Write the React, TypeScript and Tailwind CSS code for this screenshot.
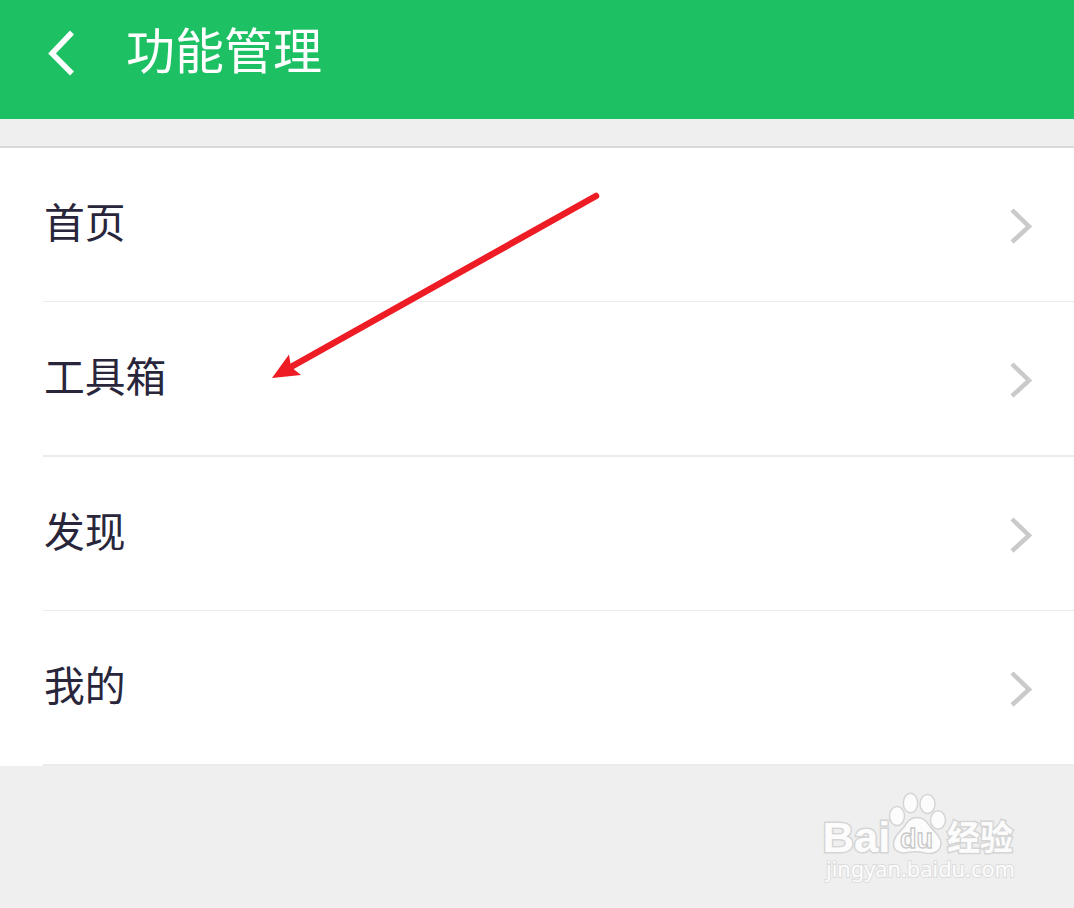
const rows = [
  { label: "首页", size: "h-[154px]", line: "border-b" },
  { label: "工具箱", size: "h-[155px]", line: "border-b-2" },
  { label: "发现", size: "h-[154px]", line: "border-b" },
  { label: "我的", size: "h-[155px]", line: "border-b-2" },
];

const Header = () => {
  return (
    <header className="flex h-[119px] items-start bg-[#1dc163] text-white">
      <svg className="mt-[30px] ml-[46px] h-12 w-8" viewBox="0 0 32 48" fill="none">
        <path d="M26 2.5L6 23.5L26 43.5" stroke="currentColor" strokeWidth="5.5" />
      </svg>
      <h1 className="mt-[12px] ml-[48px] text-[49px] leading-[72px]">功能管理</h1>
    </header>
  );
};

const Row = ({ label, size, line }: { label: string; size: string; line: string }) => {
  return (
    <li className={`flex bg-white pl-[43px] ${size}`}>
      <div className={`flex flex-1 items-center justify-between border-[#ebebeb] pr-[41px] ${line}`}>
        <span className="mb-[8px] ml-px text-[40.8px] leading-[60px]">{label}</span>
        <svg className="mt-[2px] h-10 w-6" viewBox="0 0 24 40" fill="none">
          <path d="M3 4L20 20.5L3 36" stroke="#cacaca" strokeWidth="4.5" />
        </svg>
      </div>
    </li>
  );
};

const Arrow = () => {
  return (
    <svg className="absolute top-[185px] left-[265px] h-[200px] w-[340px]" viewBox="265 185 340 200">
      <path d="M596 196L290 367.5" stroke="#ee1c25" strokeWidth="6.5" strokeLinecap="round" />
      <path d="M272 378L289 354.5L291 367L301 375Z" fill="#ee1c25" />
    </svg>
  );
};

const Watermark = () => {
  return (
    <svg
      className="absolute top-[785px] left-[815px] h-[105px] w-[210px] font-['Liberation_Sans','Noto_Sans_CJK_SC',sans-serif]"
      viewBox="815 785 210 105"
      fill="#fcfcfc"
      stroke="#d5d5d5"
      strokeWidth="1.5"
    >
      <g fontWeight="700" paintOrder="stroke" strokeWidth="3">
        <text x="822.5" y="851.5" fontSize="43" textLength="68" lengthAdjust="spacingAndGlyphs">
          Bai
        </text>
        <text x="947" y="849.5" fontSize="34" textLength="66" lengthAdjust="spacingAndGlyphs">
          经验
        </text>
      </g>
      <ellipse cx="897" cy="816" rx="7.5" ry="9.5" />
      <ellipse cx="910.5" cy="803" rx="7.2" ry="9.8" />
      <ellipse cx="927.5" cy="804" rx="7.5" ry="9.5" />
      <ellipse cx="938" cy="820" rx="7.5" ry="9.3" />
      <path d="M917 817.5C910 817.5 907 822 904 827C900 832 893.5 836 893.5 844C893.5 851 900 854 907 852.5C913 851.5 920 851.5 925 853C934 855 941 851 941 843C941 836 933 831 929 825C926 820 922 817.5 917 817.5Z" />
      <text x="900" y="847.5" fontSize="27" fontWeight="700" textLength="33" lengthAdjust="spacingAndGlyphs" stroke="#c8c8c8" strokeWidth="1.3">
        du
      </text>
      <text
        className="font-['Noto_Sans',sans-serif]"
        x="826"
        y="877"
        fontSize="22"
        textLength="189"
        lengthAdjust="spacingAndGlyphs"
        paintOrder="stroke"
        strokeWidth="2"
        stroke="#dcdcdc"
      >
        jingyan.baidu.com
      </text>
    </svg>
  );
};

export default function App() {
  return (
    <div className="relative h-[908px] w-[1074px] overflow-hidden bg-[#efefef] font-['Noto_Sans_CJK_SC',sans-serif] text-[#29263c]">
      <Header />
      <ul className="mt-[27px] border-t-2 border-[#d9d9d9]">
        {rows.map((row) => (
          <Row key={row.label} {...row} />
        ))}
      </ul>
      <Arrow />
      <Watermark />
    </div>
  );
}
